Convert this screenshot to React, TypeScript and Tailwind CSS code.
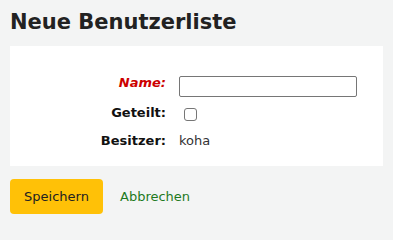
import { useState } from "react";

export default function App() {
  const [name, setName] = useState("");
  const [shared, setShared] = useState(false);

  return (
    <div className="min-h-[240px] bg-[#f3f4f4] px-[10px] pt-[12px] font-['DejaVu_Sans',sans-serif] text-[13px] text-[#222]">
      <h1 className="mb-[13px] text-[21px] font-bold leading-[21px] text-[#222]">Neue Benutzerliste</h1>

      <form className="flex flex-col">
        <div className="flex flex-col bg-white pb-[17px] pt-[29px]">
          <div className="flex items-start">
            <label htmlFor="listname" className="w-[169px] pr-[13px] text-right font-bold italic leading-[16px] text-[#cc0000]">
              Name:
            </label>
            <input
              id="listname"
              type="text"
              value={name}
              onChange={e => setName(e.target.value)}
              className="mt-[1px] h-[21px] w-[178px] rounded-[2px] border border-[#767676] bg-white px-1 text-[13px] outline-none"
            />
          </div>

          <div className="mt-[8px] flex items-start">
            <label htmlFor="shared" className="w-[169px] pr-[13px] text-right font-bold leading-[16px] text-[#111]">
              Geteilt:
            </label>
            <input
              id="shared"
              type="checkbox"
              checked={shared}
              onChange={e => setShared(e.target.checked)}
              className="ml-[5px] mt-[3px] h-[13px] w-[13px] appearance-none rounded-[3px] border border-[#767676] bg-white checked:bg-[#0075ff]"
            />
          </div>

          <div className="mt-[12px] flex items-start">
            <span className="w-[169px] pr-[13px] text-right font-bold leading-[16px] text-[#111]">Besitzer:</span>
            <span className="leading-[16px] text-[#333]">koha</span>
          </div>
        </div>

        <div className="mt-[13px] flex items-center gap-[17px]">
          <button
            type="submit"
            className="flex h-[35px] w-[93px] items-center justify-center rounded-[4px] bg-[#ffc107] text-[13px] text-[#222]"
          >
            Speichern
          </button>
          <a href="#" className="text-[13px] text-[#1e7a1e]">Abbrechen</a>
        </div>
      </form>
    </div>
  );
}
